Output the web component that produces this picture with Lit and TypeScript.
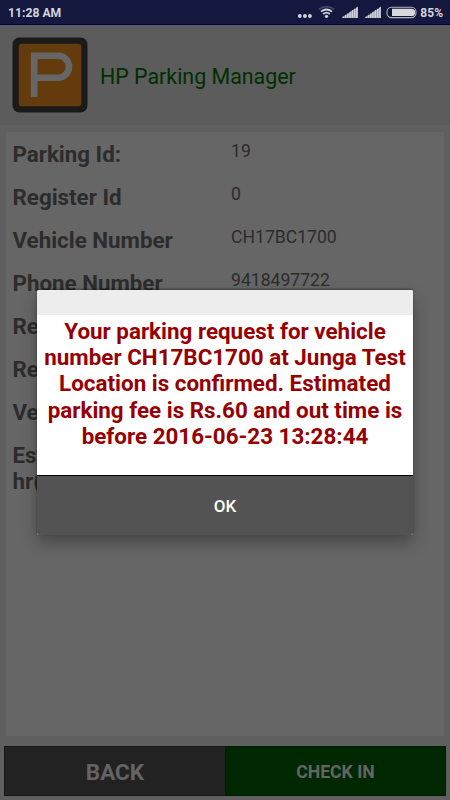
import { LitElement, html, css, svg } from "lit";
import { customElement } from "lit/decorators.js";

interface Row {
  label: string[];
  value: string;
}

const ROWS: Row[] = [
  { label: ["Parking Id:"], value: "19" },
  { label: ["Register Id"], value: "0" },
  { label: ["Vehicle Number"], value: "CH17BC1700" },
  { label: ["Phone Number"], value: "9418497722" },
  { label: ["Re"], value: "" },
  { label: ["Re"], value: "" },
  { label: ["Ve"], value: "" },
  { label: ["Est", "hr("], value: "" },
];

const MESSAGE = [
  "Your parking request for vehicle",
  "number CH17BC1700 at Junga Test",
  "Location is confirmed. Estimated",
  "parking fee is Rs.60 and out time is",
  "before 2016-06-23 13:28:44",
];

@customElement("status-bar")
class StatusBar extends LitElement {
  static styles = css`
    :host {
      display: flex;
      align-items: center;
      box-sizing: border-box;
      height: 25px;
      padding: 0 7px 0 8px;
      background: #14183f;
      border-bottom: 1px solid #00004e;
      color: #d3d4dc;
      font: 700 12px/24px Roboto, sans-serif;
    }
    .time {
      flex: 1;
      padding-top: 1px;
      font-size: 12.200px;
    }
    .icons {
      display: block;
      margin-right: 3px;
    }
    .battery {
      padding-top: 1px;
      font-size: 12px;
    }
  `;

  private signal(x: number) {
    return svg`
      <path d=${`M${x} 18L${x + 16} 7V18z`} fill="#8d8f9f" />
      ${[0, 1, 2, 3, 4, 5, 6].map(
        (i) => svg`<path d="M${x + 0.3 + i * 2.3} 18V${17 - i * 1.55}l1.600 -1.100V18z" fill="#cfd0d8" />`
      )}`;
  }

  render() {
    return html`
      <span class="time">11:28 AM</span>
      <svg class="icons" width="120" height="24" viewBox="297 0 120 24">
        <g fill="#d3d4dc">
          <circle cx="299.8" cy="16" r="1.9" />
          <circle cx="304.9" cy="16" r="1.9" />
          <circle cx="309.9" cy="16" r="1.9" />
          <circle cx="326.5" cy="16.3" r="1.6" />
        </g>
        <g fill="none" stroke="#d3d4dc" stroke-width="1.7">
          <path d="M323.2 14q3.3-2.8 6.6 0" />
          <path d="M321 11.7q5.5-4.4 11 0" />
          <path d="M319 9.2q7.5-5 15 0" stroke="#444866" />
        </g>
        ${this.signal(342)} ${this.signal(365)}
        <rect x="387" y="7.2" width="29" height="10.4" rx="4.6" fill="#101330" stroke="#b5b6c2" stroke-width="1.1" />
        <path d="M392 8.8h19.500a3.500 3.500 0 0 1 0 7.200h-19.500z" fill="#d7d8df" />
      </svg>
      <span class="battery">85%</span>
    `;
  }
}

@customElement("confirm-dialog")
class ConfirmDialog extends LitElement {
  static styles = css`
    :host {
      display: block;
      box-sizing: border-box;
      border-radius: 2px;
      overflow: hidden;
      background: #fff;
      font-family: Roboto, sans-serif;
      box-shadow: 0 8px 16px rgba(0, 0, 0, 0.3), 0 -1px 2px rgba(0, 0, 0, 0.4);
    }
    .title {
      height: 25px;
      background: #ededed;
    }
    .message {
      height: 160px;
      box-sizing: border-box;
      padding-top: 3px;
      text-align: center;
      white-space: nowrap;
      font-weight: 700;
      font-size: 22.400px;
      line-height: 26.200px;
      color: #960000;
    }
    .ok {
      display: block;
      box-sizing: border-box;
      width: 100%;
      height: 60px;
      padding: 1px 0 0;
      border: 0;
      border-top: 1px solid #000;
      background: #535353;
      color: #fff;
      font: 500 17px/58px Roboto, sans-serif;
    }
  `;

  render() {
    return html`
      <div class="title"></div>
      <div class="message">${MESSAGE.map((line) => html`<div>${line}</div>`)}</div>
      <button class="ok">OK</button>
    `;
  }
}

@customElement("app-root")
class AppRoot extends LitElement {
  static styles = css`
    :host {
      display: flex;
      flex-direction: column;
      position: relative;
      box-sizing: border-box;
      width: 450px;
      height: 800px;
      overflow: hidden;
      background: #5f5f5f;
      font-family: Roboto, sans-serif;
    }
    .header {
      display: flex;
      align-items: center;
      gap: 12px;
      height: 100px;
      padding-left: 12px;
      background: #5c5c5c;
      color: #002f00;
      font-size: 21.400px;
    }
    .title {
      padding-top: 2px;
    }
    .logo {
      display: block;
    }
    .panel {
      flex: 1;
      margin: 7px 6px 10px;
      padding: 8.500px 6.500px;
      background: #666;
    }
    .row {
      display: grid;
      grid-template-columns: 218.500px 1fr;
      min-height: 43px;
    }
    .label {
      font-weight: 700;
      font-size: 22.350px;
      line-height: 26.200px;
      color: #2c2c2c;
    }
    .value {
      font-size: 17.600px;
      line-height: 20px;
      color: #2c2c2c;
    }
    .actions {
      display: grid;
      grid-template-columns: 221px 221px;
      height: 50px;
      padding: 0 4px 4px;
    }
    .action {
      padding: 2px 0 0;
      border: 1px solid #161616;
      border-right: 0;
      background: #222;
      color: #646464;
      font: 700 22.5px/46px Roboto, sans-serif;
    }
    .primary {
      border: 1px solid #002000;
      background: #002800;
      font-size: 17.600px;
    }
    .dialog {
      position: absolute;
      left: 37px;
      top: 290px;
      width: 376px;
      height: 245px;
    }
  `;

  render() {
    return html`
      <status-bar></status-bar>
      <div class="header">
        <svg class="logo" width="76" height="76" viewBox="0 0 76 76">
          <rect x="0.5" y="0.5" width="75" height="75" rx="7" fill="#1a1a1a" />
          <rect x="6.700" y="6.700" width="62.600" height="62.600" rx="3" fill="#643b0c" />
          <path d="M22.200 60V18.700H46a11 11 0 0 1 0 22H22.200" fill="none" stroke="#666" stroke-width="6.600" />
        </svg>
        <span class="title">HP Parking Manager</span>
      </div>
      <div class="panel">
        ${ROWS.map(
          (row) => html`<div class="row">
            <div class="label">${row.label.map((line) => html`<div>${line}</div>`)}</div>
            <div class="value">${row.value}</div>
          </div>`
        )}
      </div>
      <div class="actions">
        <button class="action">BACK</button>
        <button class="action primary">CHECK IN</button>
      </div>
      <confirm-dialog class="dialog"></confirm-dialog>
    `;
  }
}
